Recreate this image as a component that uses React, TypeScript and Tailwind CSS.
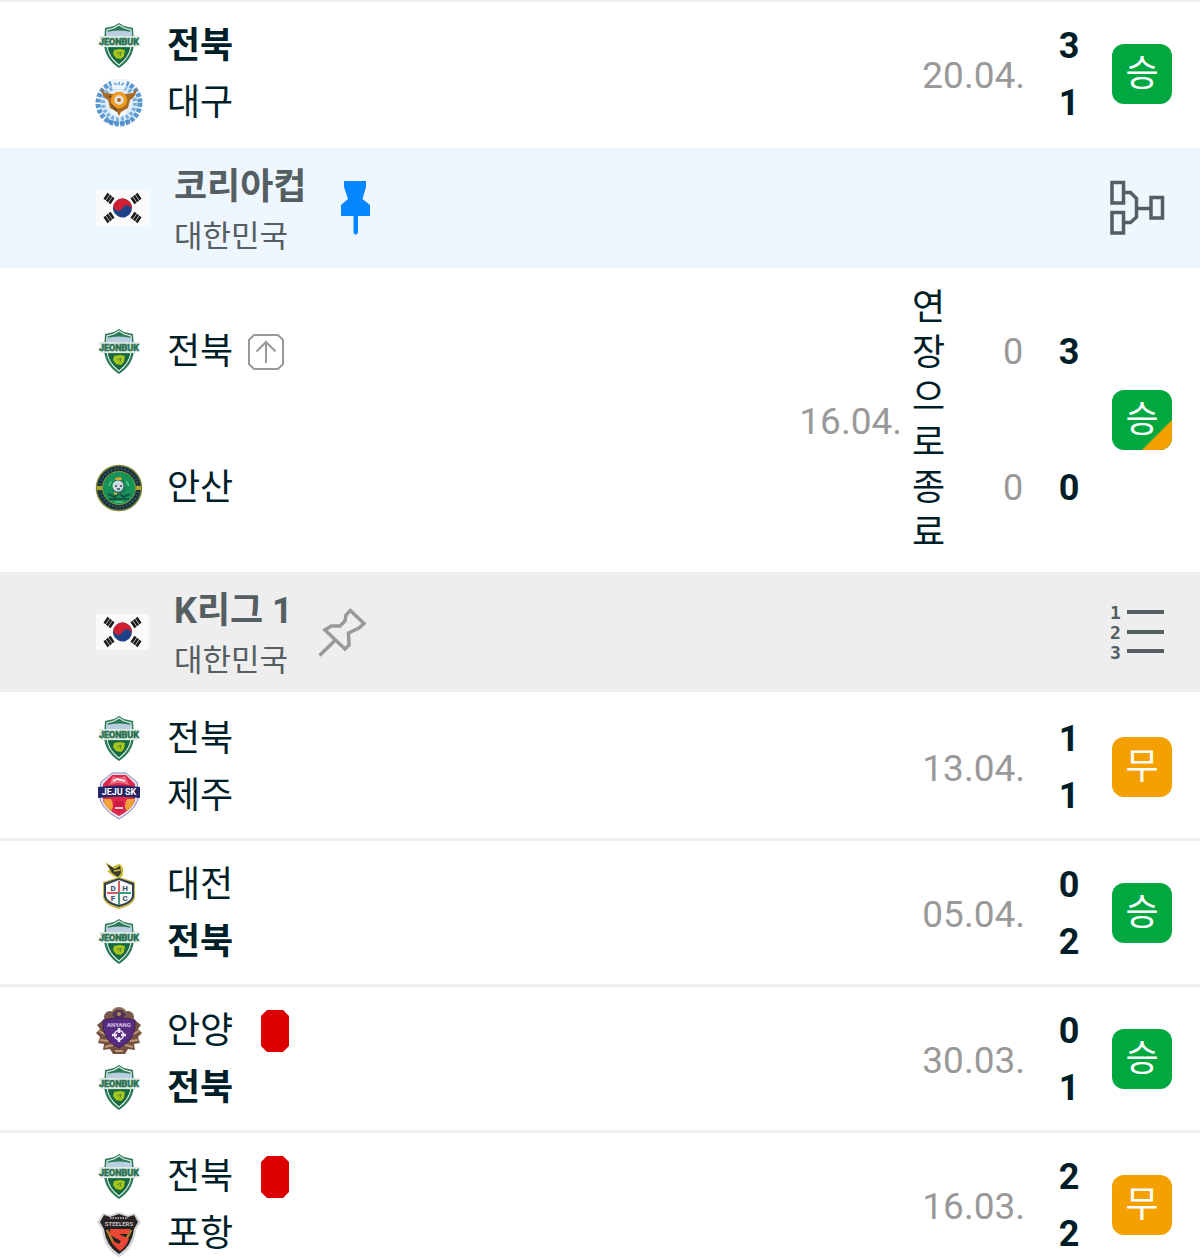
import { clsx } from "clsx";
import type { ReactNode } from "react";

type Club = "jeonbuk" | "daegu" | "ansan" | "jeju" | "daejeon" | "anyang" | "pohang";

type Team = {
  club: Club;
  score: number;
  partial?: number;
  winner?: boolean;
  advanced?: boolean;
  redCard?: boolean;
};

type Match = {
  id: string;
  date: string;
  status?: string;
  result: "win" | "draw";
  teams: Team[];
};

const clubNames: Record<Club, string> = {
  jeonbuk: "전북",
  daegu: "대구",
  ansan: "안산",
  jeju: "제주",
  daejeon: "대전",
  anyang: "안양",
  pohang: "포항",
};

const previousMatches: Match[] = [
  {
    id: "m1",
    date: "20.04.",
    result: "win",
    teams: [
      { club: "jeonbuk", score: 3, winner: true },
      { club: "daegu", score: 1 },
    ],
  },
];

const cupMatches: Match[] = [
  {
    id: "m2",
    date: "16.04.",
    status: "연장으로종료",
    result: "win",
    teams: [
      { club: "jeonbuk", score: 3, partial: 0, advanced: true },
      { club: "ansan", score: 0, partial: 0 },
    ],
  },
];

const leagueMatches: Match[] = [
  {
    id: "m3",
    date: "13.04.",
    result: "draw",
    teams: [
      { club: "jeonbuk", score: 1 },
      { club: "jeju", score: 1 },
    ],
  },
  {
    id: "m4",
    date: "05.04.",
    result: "win",
    teams: [
      { club: "daejeon", score: 0 },
      { club: "jeonbuk", score: 2, winner: true },
    ],
  },
  {
    id: "m5",
    date: "30.03.",
    result: "win",
    teams: [
      { club: "anyang", score: 0, redCard: true },
      { club: "jeonbuk", score: 1, winner: true },
    ],
  },
  {
    id: "m6",
    date: "16.03.",
    result: "draw",
    teams: [
      { club: "jeonbuk", score: 2, redCard: true },
      { club: "pohang", score: 2 },
    ],
  },
];

// Club crests, all drawn on a 48x48 canvas
const crests: Record<Club, ReactNode> = {
  jeonbuk: (
    <>
      <path d="M24 1L29 4L38 6L39 22Q38 37 24 46Q10 37 9 22L10 6L19 4Z" fill="#2b7a58" />
      <path d="M24 3L29 6L36 8V23Q35 35 24 43Q13 35 12 23V8L19 6Z" fill="none" stroke="#e4efe8" strokeWidth="1.2" />
      <path d="M11 10Q24 7 37 10V14H11Z" fill="#b9cfdf" />
      <path d="M4 14H44L42 25H6Z" fill="#dbe9e1" />
      <text x="24" y="23" textAnchor="middle" fontSize="9" fontWeight="700" fill="#28704f" stroke="#28704f" strokeWidth="0.6" fontFamily="Roboto">
        JEONBUK
      </text>
      <path d="M13 26H35Q33 35 24 42Q15 35 13 26Z" fill="#17693f" />
      <path d="M19 28L25 27L30 28L29 34L26 37L21 36L18 32Z" fill="#a8c51e" />
      <path d="M22 32L26 30L25 34" fill="none" stroke="#4b8a35" strokeWidth="1" />
    </>
  ),
  daegu: (
    <>
      <circle cx="24" cy="24" r="20" fill="#dfeefa" />
      <circle cx="24" cy="24" r="21" fill="none" stroke="#5b98d0" strokeWidth="5" strokeDasharray="4 1.5" />
      <circle cx="24" cy="24" r="16" fill="none" stroke="#7eb0dd" strokeWidth="4" strokeDasharray="3 2" />
      <path d="M15 0H33L30 10H18Z" fill="#eaf4fd" />
      <path d="M19 4L22 6M24 3V6M29 4L26 6" stroke="#5c97cf" strokeWidth="1.5" />
      <path d="M12 20L24 12L36 20L31 35L24 39L17 35Z" fill="#eef5fb" />
      <path d="M6 9L10 14L18 15Q24 12 30 15L38 14L42 9Q41 18 35 21L33 29L26 33L24 37L22 33L15 29L13 21Q7 18 6 9Z" fill="#a96b23" />
      <path d="M14 17L19 19L17 26L22 32" fill="none" stroke="#5f431f" strokeWidth="1.5" />
      <circle cx="24" cy="21" r="6.500" fill="#dfe6ea" stroke="#ef9c20" strokeWidth="3.500" />
      <circle cx="24" cy="21" r="2" fill="#b36a15" />
      <path d="M13 42Q24 46 35 42" fill="none" stroke="#4b8dca" strokeWidth="3" strokeDasharray="2 1" />
    </>
  ),
  ansan: (
    <>
      <circle cx="24" cy="24" r="22.5" fill="#17323c" stroke="#7d8739" strokeWidth="1.5" />
      <circle cx="24" cy="24" r="19" fill="none" stroke="#3f5c66" strokeWidth="2" strokeDasharray="1.5 2" />
      <circle cx="24" cy="24" r="16.500" fill="#149257" stroke="#8c9a37" strokeWidth="1" />
      <path d="M2 22H7V26H2ZM41 22H46V26H41Z" fill="#a7a52e" />
      <path d="M13 30L20 33L24 29L28 33L35 30M14 35L34 35" stroke="#155545" strokeWidth="2" fill="none" />
      <path d="M19 17L24 13L29 17L31 27L24 31L17 27Z" fill="#267458" />
      <circle cx="23" cy="22" r="5.500" fill="#cfd9df" />
      <path d="M20 22H22M25 22H27M22 25H25" stroke="#294b5a" strokeWidth="1.3" />
      <path d="M20 14L26 13L27 16H20Z" fill="#d4a832" />
      <path d="M19 29L22 30" stroke="#d7b63b" strokeWidth="2" />
      <path d="M14 22L16 17M34 22L31 17M20 38H28" stroke="#5cc18a" strokeWidth="1.5" />
    </>
  ),
  jeju: (
    <>
      <path d="M17 1H31L42 10L44 22Q43 37 24 47Q5 37 4 22L6 10Z" fill="#e5e2ef" stroke="#8a87b4" strokeWidth="1" />
      <path d="M17 3H31L40 12V29Q36 38 24 44Q12 38 8 29V12Z" fill="#dc294c" />
      <path d="M18 4Q24 7 30 4L34 13Q24 9 14 13Z" fill="#f06a7e" />
      <path d="M18 9L22 7L26 8L30 9" fill="none" stroke="#fff" strokeWidth="1.5" />
      <path d="M8 27H16Q20 34 16 39Q9 34 8 27ZM40 27H32Q28 34 32 39Q39 34 40 27Z" fill="#efa13c" />
      <path d="M20 29H28L29 35L24 40L19 35Z" fill="#cf1943" />
      <path d="M20 36H28" stroke="#fff" strokeWidth="1.5" />
      <path d="M3 15Q24 12 45 15V26Q24 23 3 26Z" fill="#242565" />
      <text x="24" y="23" textAnchor="middle" fontSize="9" fontWeight="700" fill="#fff" fontFamily="Roboto">
        JEJU SK
      </text>
    </>
  ),
  daejeon: (
    <>
      <path d="M10 1L18 6L21 4L25 3L28 7L28 14L24 18L18 15L12 10L15 9Z" fill="#c8b936" />
      <path d="M12 3L20 8L25 5L26 12L23 16L17 12Z" fill="#39392f" />
      <path d="M19 10L25 9" stroke="#d4c246" strokeWidth="1.5" />
      <path d="M24 16L40 21V36Q39 44 24 48Q9 44 8 36V21Z" fill="#c9ba45" />
      <path d="M24 17L39 22V36Q37 43 24 46Q11 43 9 36V22Z" fill="#344052" />
      <path d="M24 19L37 24V35Q36 41 24 44Q12 41 11 35V24Z" fill="#f7f9f9" />
      <path d="M24 20V32H12" fill="none" stroke="#d65b66" strokeWidth="2" />
      <path d="M24 44V32H36" fill="none" stroke="#3f9b80" strokeWidth="2" />
      <g fontSize="8" fontWeight="700" fill="#33465a" textAnchor="middle" fontFamily="Roboto">
        <text x="18" y="30">D</text>
        <text x="30" y="30">H</text>
        <text x="18" y="40">F</text>
        <text x="30" y="40">C</text>
      </g>
    </>
  ),
  anyang: (
    <>
      <circle cx="24" cy="8" r="8" fill="#8a6950" />
      <circle cx="15" cy="10" r="6" fill="#79594c" />
      <circle cx="33" cy="10" r="6" fill="#79594c" />
      <path d="M17 8L21 3H27L31 8L27 12H21Z" fill="#50325a" />
      <circle cx="24" cy="7" r="2" fill="#b08b5e" />
      <path d="M7 14L2 18L5 22L1 26L5 30L3 36L9 37L8 43L15 42L18 47H30L33 42L40 43L39 37L45 36L43 30L47 26L43 22L46 18L41 14Z" fill="#73503f" />
      <path d="M4 24L11 28M5 33L13 34M10 40L18 38M44 24L37 28M43 33L35 34M38 40L30 38M20 44H28" stroke="#bd9870" strokeWidth="2" />
      <path d="M8 13Q24 9 40 13Q42 32 24 41Q6 32 8 13Z" fill="#572c80" stroke="#40205c" strokeWidth="1" />
      <text x="24" y="20" textAnchor="middle" fontSize="6" fontWeight="700" fill="#d6c5e4" fontFamily="Roboto">
        ANYANG
      </text>
      <circle cx="24" cy="28" r="4.5" fill="none" stroke="#eee6f5" strokeWidth="1.5" />
      <path d="M24 21V26M24 30V35M17 28H22M26 28H31" stroke="#eee6f5" strokeWidth="2.5" />
    </>
  ),
  pohang: (
    <>
      <path d="M8 3L15 5L24 2L33 5L40 3L46 12L41 20Q39 39 24 47Q9 39 7 20L2 12Z" fill="#d6d5d6" />
      <path d="M9 5L15 7L24 4L33 7L39 5L43 12L39 19Q37 36 24 44Q11 36 9 19L5 12Z" fill="#272323" />
      <path d="M15 8H33" stroke="#a29e9d" strokeWidth="2" strokeDasharray="1.5 1" />
      <text x="24" y="16" textAnchor="middle" fontSize="6" fontWeight="700" fill="#c4c0bf" fontFamily="Roboto">
        STEELERS
      </text>
      <path d="M12 20L19 34M36 20L29 34" stroke="#b3822f" strokeWidth="2.500" />
      <path d="M15 19H35L33 24H24L34 29Q31 37 25 41Q18 36 16 30L24 34L26 31L15 25Z" fill="#ea4736" />
    </>
  ),
};

function Crest({ club }: { club: Club }) {
  return (
    <svg viewBox="0 0 48 48" className="size-12 shrink-0" aria-hidden="true">
      {crests[club]}
    </svg>
  );
}

function KoreaFlag() {
  return (
    <svg viewBox="0 0 53 36" className="h-9 w-[53px] shrink-0" aria-hidden="true">
      <rect width="53" height="36" fill="#fafafa" />
      <g transform="rotate(25 26.5 18)">
        <circle cx="26.5" cy="18" r="9.5" fill="#1d4286" />
        <path d="M17 18a9.5 9.5 0 0 1 19 0a4.75 4.75 0 0 0 -9.5 0a4.75 4.75 0 0 1 -9.5 0Z" fill="#d02030" />
      </g>
      <g stroke="#1b1b1b" strokeWidth="2.6">
        <path d="M8.500 9.500L12.500 3.500M11 11.500L15 5.500M13.500 13.500L17.500 7.500" />
        <path d="M40.500 3.500L44.500 9.500M38 5.500L42 11.500M35.500 7.500L39.500 13.500" />
        <path d="M8.500 26.500L12.500 32.500M11 24.500L15 30.500M13.500 22.500L17.500 28.500" />
        <path d="M40.500 32.500L44.500 26.500M38 30.500L42 24.500M35.500 28.500L39.500 22.500" />
      </g>
    </svg>
  );
}

function PinIcon({ pinned }: { pinned: boolean }) {
  return (
    <svg viewBox="0 0 50 60" className="h-[60px] w-[50px]" aria-hidden="true">
      {pinned ? (
        <path
          d="M14 3H36V9L32.500 21L40 27V38H28V55L25.500 57L23.500 55V38H11V27L18 21L14 9Z"
          fill="#0787ff"
        />
      ) : (
        <path
          d="M33.300 8.500L47 21.500L42 26L31.500 31L32 43L28 47L8 28L14 24H23L28 19L29 13ZM18.500 38L2.500 53.500"
          fill="none"
          stroke="#999"
          strokeWidth="3.500"
        />
      )}
    </svg>
  );
}

function BracketIcon() {
  return (
    <svg viewBox="0 0 56 56" className="size-14" fill="none" stroke="#555e61" strokeWidth="3.500" aria-hidden="true">
      <rect x="2" y="2.500" width="11.500" height="20.500" />
      <rect x="2" y="32.500" width="11.500" height="20.500" />
      <rect x="41" y="17.500" width="11.500" height="20.500" />
      <path d="M15 12.500H20.500L26.500 18.500V37L20.500 42.500H15M26.500 28.500H40" />
    </svg>
  );
}

function StandingsIcon() {
  return (
    <svg viewBox="0 0 56 56" className="size-14 overflow-visible" fill="#555e61" aria-hidden="true">
      <g fontFamily="DejaVu Sans Mono" fontSize="18" fontWeight="700">
        <text x="0" y="15">1</text>
        <text x="0" y="35">2</text>
        <text x="0" y="55">3</text>
      </g>
      <path d="M17 6H54V10H17ZM17 26H54V30H17ZM17 45H54V49H17Z" />
    </svg>
  );
}

function AdvancedIcon() {
  return (
    <svg viewBox="0 0 36 36" className="ml-[15px] size-9" fill="none" stroke="#999" strokeWidth="2" aria-hidden="true">
      <path d="M6 1H30L35 6V30L30 35H6L1 30V6Z" />
      <path d="M18 29V8M8.500 17.500L18 8L27.500 17.500" />
    </svg>
  );
}

function RedCardIcon() {
  return (
    <svg viewBox="0 0 28 42" className="ml-7 h-[42px] w-7" aria-hidden="true">
      <path d="M6 0H22L28 6V36L22 42H6L0 36V6Z" fill="#dc0000" />
    </svg>
  );
}

type LeagueHeaderProps = {
  name: string;
  pinned?: boolean;
  children: ReactNode;
};

function LeagueHeader({ name, pinned = false, children }: LeagueHeaderProps) {
  return (
    <header
      className={clsx(
        "flex items-center py-[6px] pl-24 pr-[34px] text-[#555e61]",
        pinned ? "bg-[#eef6ff]" : "bg-[#eee]"
      )}
    >
      <KoreaFlag />
      <div className="ml-[25px] flex flex-col pt-2">
        <a href="#league" className="text-[36px] leading-[50px] font-bold">
          {name}
        </a>
        <span className="text-[31px] leading-[50px]">대한민국</span>
      </div>
      <button type="button" aria-label="고정" className="ml-6">
        <PinIcon pinned={pinned} />
      </button>
      <a href="#table" aria-label="순위" className="ml-auto">
        {children}
      </a>
    </header>
  );
}

function ResultBadge({ result, extraTime }: { result: Match["result"]; extraTime: boolean }) {
  return (
    <button
      type="button"
      className={clsx(
        "relative ml-[21px] size-[60px] shrink-0 overflow-hidden rounded-xl text-[36px] leading-[56px] text-white",
        result === "win" ? "bg-[#00a83f]" : "bg-[#f3a000]"
      )}
    >
      {result === "win" ? "승" : "무"}
      {extraTime && (
        <svg viewBox="0 0 30 30" className="absolute right-0 bottom-0 size-[30px]" aria-hidden="true">
          <path d="M30 0V30H0Z" fill="#f3a000" />
        </svg>
      )}
    </button>
  );
}

function MatchRow({ match }: { match: Match }) {
  const { teams, status } = match;

  return (
    <li
      className={clsx(
        "flex items-center pl-[95px] pr-7",
        status ? "py-4" : "border-t-[3px] border-[#eee] pt-[15px] pb-[14px] first:border-transparent"
      )}
    >
      <div className="flex flex-1 flex-col self-stretch">
        {teams.map((team) => (
          <div key={team.club} className="flex min-h-[57px] flex-1 items-center">
            <Crest club={team.club} />
            <span className={clsx("ml-6 leading-[50px]", team.winner && "font-bold")}>
              {clubNames[team.club]}
            </span>
            {team.advanced && <AdvancedIcon />}
            {team.redCard && <RedCardIcon />}
          </div>
        ))}
      </div>

      <time className="pt-1 text-[37px] text-[#999]">{match.date}</time>
      {status && <span className="ml-[10px] w-[34px] pt-[2px] leading-[45px] break-all">{status}</span>}

      {status && (
        <div className="ml-[47px] flex w-10 flex-col self-stretch text-center text-[#999]">
          {teams.map((team) => (
            <span key={team.club} className="flex flex-1 items-center justify-center">
              {team.partial}
            </span>
          ))}
        </div>
      )}

      <div className={clsx("flex w-11 flex-col self-stretch font-bold", status ? "ml-[14px]" : "ml-[22px]")}>
        {teams.map((team) => (
          <span key={team.club} className="flex flex-1 items-center justify-center">
            {team.score}
          </span>
        ))}
      </div>

      <ResultBadge result={match.result} extraTime={Boolean(status)} />
    </li>
  );
}

function MatchList({ matches }: { matches: Match[] }) {
  return (
    <ul className="-mt-[3px] first:mt-[-3px] [header+&]:mt-0">
      {matches.map((match) => (
        <MatchRow key={match.id} match={match} />
      ))}
    </ul>
  );
}

export default function App() {
  return (
    <main className="overflow-hidden bg-white font-['Roboto','Noto_Sans_CJK_KR',sans-serif] text-[36px] leading-[50px] text-[#001e28]">
      {/* Tail of the section above */}
      <div className="border-t-2 border-[#eee] pb-[3px]">
        <MatchList matches={previousMatches} />
      </div>

      <section>
        <LeagueHeader name="코리아컵" pinned>
          <BracketIcon />
        </LeagueHeader>
        <MatchList matches={cupMatches} />
      </section>

      <section>
        <LeagueHeader name="K리그 1">
          <StandingsIcon />
        </LeagueHeader>
        <MatchList matches={leagueMatches} />
      </section>
    </main>
  );
}
